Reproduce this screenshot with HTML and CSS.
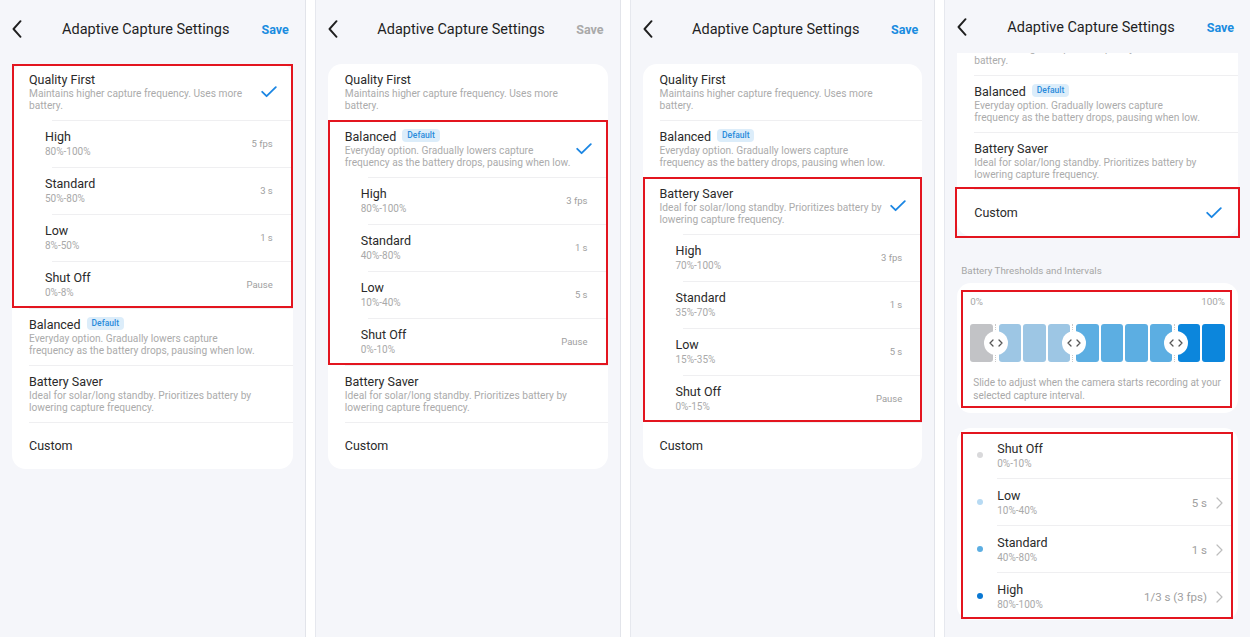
FILE: index.html
```html
<!DOCTYPE html>
<html lang="en">
<head>
<meta charset="utf-8">
<title>Adaptive Capture Settings</title>
<link rel="stylesheet" href="styles.css">
</head>
<body>
<div class="screens">

  <!-- Screen 1: Quality First -->
  <section class="phone">
    <header class="topbar">
      <span class="back"><svg width="10" height="18" viewBox="0 0 10 18"><path d="M8.5 1.2 L1.5 9 L8.5 16.8" fill="none" stroke="#1f1f1f" stroke-width="1.9" stroke-linecap="round" stroke-linejoin="round"/></svg></span>
      <h1 class="title">Adaptive Capture Settings</h1>
      <span class="save">Save</span>
    </header>
    <div class="content">
      <div class="card">
        <div class="group marked">
          <div class="mode">
            <div class="mode-text">
              <div class="mode-name">Quality First</div>
              <div class="mode-desc">Maintains higher capture frequency. Uses more battery.</div>
            </div>
            <svg class="check" width="16" height="12" viewBox="0 0 16 12"><path d="M1.2 5.8 L5.6 10.2 L14.8 1.2" fill="none" stroke="#1b86e3" stroke-width="1.8" stroke-linecap="round" stroke-linejoin="round"/></svg>
          </div>
          <div class="sub"><div><div class="sub-name">High</div><div class="sub-range">80%-100%</div></div><span class="sub-val">5 fps</span></div>
          <div class="sub"><div><div class="sub-name">Standard</div><div class="sub-range">50%-80%</div></div><span class="sub-val">3 s</span></div>
          <div class="sub"><div><div class="sub-name">Low</div><div class="sub-range">8%-50%</div></div><span class="sub-val">1 s</span></div>
          <div class="sub"><div><div class="sub-name">Shut Off</div><div class="sub-range">0%-8%</div></div><span class="sub-val">Pause</span></div>
        </div>
        <div class="mode">
          <div class="mode-text">
            <div class="mode-name">Balanced <span class="badge">Default</span></div>
            <div class="mode-desc">Everyday option. Gradually lowers capture frequency as the battery drops, pausing when low.</div>
          </div>
        </div>
        <div class="mode">
          <div class="mode-text">
            <div class="mode-name">Battery Saver</div>
            <div class="mode-desc">Ideal for solar/long standby. Prioritizes battery by lowering capture frequency.</div>
          </div>
        </div>
        <div class="mode mode-plain">
          <div class="mode-text"><div class="mode-name">Custom</div></div>
        </div>
      </div>
    </div>
  </section>

  <!-- Screen 2: Balanced -->
  <section class="phone">
    <header class="topbar">
      <span class="back"><svg width="10" height="18" viewBox="0 0 10 18"><path d="M8.5 1.2 L1.5 9 L8.5 16.8" fill="none" stroke="#1f1f1f" stroke-width="1.9" stroke-linecap="round" stroke-linejoin="round"/></svg></span>
      <h1 class="title">Adaptive Capture Settings</h1>
      <span class="save save-off">Save</span>
    </header>
    <div class="content">
      <div class="card">
        <div class="mode">
          <div class="mode-text">
            <div class="mode-name">Quality First</div>
            <div class="mode-desc">Maintains higher capture frequency. Uses more battery.</div>
          </div>
        </div>
        <div class="group marked">
          <div class="mode">
            <div class="mode-text">
              <div class="mode-name">Balanced <span class="badge">Default</span></div>
              <div class="mode-desc">Everyday option. Gradually lowers capture frequency as the battery drops, pausing when low.</div>
            </div>
            <svg class="check" width="16" height="12" viewBox="0 0 16 12"><path d="M1.2 5.8 L5.6 10.2 L14.8 1.2" fill="none" stroke="#1b86e3" stroke-width="1.8" stroke-linecap="round" stroke-linejoin="round"/></svg>
          </div>
          <div class="sub"><div><div class="sub-name">High</div><div class="sub-range">80%-100%</div></div><span class="sub-val">3 fps</span></div>
          <div class="sub"><div><div class="sub-name">Standard</div><div class="sub-range">40%-80%</div></div><span class="sub-val">1 s</span></div>
          <div class="sub"><div><div class="sub-name">Low</div><div class="sub-range">10%-40%</div></div><span class="sub-val">5 s</span></div>
          <div class="sub"><div><div class="sub-name">Shut Off</div><div class="sub-range">0%-10%</div></div><span class="sub-val">Pause</span></div>
        </div>
        <div class="mode">
          <div class="mode-text">
            <div class="mode-name">Battery Saver</div>
            <div class="mode-desc">Ideal for solar/long standby. Prioritizes battery by lowering capture frequency.</div>
          </div>
        </div>
        <div class="mode mode-plain">
          <div class="mode-text"><div class="mode-name">Custom</div></div>
        </div>
      </div>
    </div>
  </section>

  <!-- Screen 3: Battery Saver -->
  <section class="phone">
    <header class="topbar">
      <span class="back"><svg width="10" height="18" viewBox="0 0 10 18"><path d="M8.5 1.2 L1.5 9 L8.5 16.8" fill="none" stroke="#1f1f1f" stroke-width="1.9" stroke-linecap="round" stroke-linejoin="round"/></svg></span>
      <h1 class="title">Adaptive Capture Settings</h1>
      <span class="save">Save</span>
    </header>
    <div class="content">
      <div class="card">
        <div class="mode">
          <div class="mode-text">
            <div class="mode-name">Quality First</div>
            <div class="mode-desc">Maintains higher capture frequency. Uses more battery.</div>
          </div>
        </div>
        <div class="mode">
          <div class="mode-text">
            <div class="mode-name">Balanced <span class="badge">Default</span></div>
            <div class="mode-desc">Everyday option. Gradually lowers capture frequency as the battery drops, pausing when low.</div>
          </div>
        </div>
        <div class="group marked">
          <div class="mode">
            <div class="mode-text">
              <div class="mode-name">Battery Saver</div>
              <div class="mode-desc">Ideal for solar/long standby. Prioritizes battery by lowering capture frequency.</div>
            </div>
            <svg class="check" width="16" height="12" viewBox="0 0 16 12"><path d="M1.2 5.8 L5.6 10.2 L14.8 1.2" fill="none" stroke="#1b86e3" stroke-width="1.8" stroke-linecap="round" stroke-linejoin="round"/></svg>
          </div>
          <div class="sub"><div><div class="sub-name">High</div><div class="sub-range">70%-100%</div></div><span class="sub-val">3 fps</span></div>
          <div class="sub"><div><div class="sub-name">Standard</div><div class="sub-range">35%-70%</div></div><span class="sub-val">1 s</span></div>
          <div class="sub"><div><div class="sub-name">Low</div><div class="sub-range">15%-35%</div></div><span class="sub-val">5 s</span></div>
          <div class="sub"><div><div class="sub-name">Shut Off</div><div class="sub-range">0%-15%</div></div><span class="sub-val">Pause</span></div>
        </div>
        <div class="mode mode-plain">
          <div class="mode-text"><div class="mode-name">Custom</div></div>
        </div>
      </div>
    </div>
  </section>

  <!-- Screen 4: Custom -->
  <section class="phone">
    <header class="topbar topbar-tight">
      <span class="back"><svg width="10" height="18" viewBox="0 0 10 18"><path d="M8.5 1.2 L1.5 9 L8.5 16.8" fill="none" stroke="#1f1f1f" stroke-width="1.9" stroke-linecap="round" stroke-linejoin="round"/></svg></span>
      <h1 class="title">Adaptive Capture Settings</h1>
      <span class="save">Save</span>
    </header>
    <div class="content content-scrolled">
      <div class="card">
        <div class="mode">
          <div class="mode-text">
            <div class="mode-name">Quality First</div>
            <div class="mode-desc">Maintains higher capture frequency. Uses more battery.</div>
          </div>
        </div>
        <div class="mode">
          <div class="mode-text">
            <div class="mode-name">Balanced <span class="badge">Default</span></div>
            <div class="mode-desc">Everyday option. Gradually lowers capture frequency as the battery drops, pausing when low.</div>
          </div>
        </div>
        <div class="mode">
          <div class="mode-text">
            <div class="mode-name">Battery Saver</div>
            <div class="mode-desc">Ideal for solar/long standby. Prioritizes battery by lowering capture frequency.</div>
          </div>
        </div>
        <div class="group marked marked-out">
          <div class="mode mode-plain">
            <div class="mode-text"><div class="mode-name">Custom</div></div>
            <svg class="check" width="16" height="12" viewBox="0 0 16 12"><path d="M1.2 5.8 L5.6 10.2 L14.8 1.2" fill="none" stroke="#1b86e3" stroke-width="1.8" stroke-linecap="round" stroke-linejoin="round"/></svg>
          </div>
        </div>
      </div>

      <div class="section-label">Battery Thresholds and Intervals</div>

      <div class="card card-pad">
        <div class="slider marked">
          <div class="scale"><span>0%</span><span>100%</span></div>
          <div class="bar">
            <span class="seg seg-off"></span>
            <span class="cut"><span class="knob"><svg width="14" height="8" viewBox="0 0 14 8"><path d="M4 1 L1 4 L4 7 M10 1 L13 4 L10 7" fill="none" stroke="#555" stroke-width="1.3" stroke-linecap="round" stroke-linejoin="round"/></svg></span></span>
            <span class="seg seg-low"></span>
            <span class="seg seg-low"></span>
            <span class="seg seg-low"></span>
            <span class="cut"><span class="knob"><svg width="14" height="8" viewBox="0 0 14 8"><path d="M4 1 L1 4 L4 7 M10 1 L13 4 L10 7" fill="none" stroke="#555" stroke-width="1.3" stroke-linecap="round" stroke-linejoin="round"/></svg></span></span>
            <span class="seg seg-std"></span>
            <span class="seg seg-std"></span>
            <span class="seg seg-std"></span>
            <span class="seg seg-std"></span>
            <span class="cut"><span class="knob"><svg width="14" height="8" viewBox="0 0 14 8"><path d="M4 1 L1 4 L4 7 M10 1 L13 4 L10 7" fill="none" stroke="#555" stroke-width="1.3" stroke-linecap="round" stroke-linejoin="round"/></svg></span></span>
            <span class="seg seg-high"></span>
            <span class="seg seg-high"></span>
          </div>
          <p class="slider-note">Slide to adjust when the camera starts recording at your selected capture interval.</p>
        </div>
      </div>

      <div class="card card-list">
        <div class="levels marked">
          <div class="lvl">
            <span class="dot dot-off"></span>
            <div class="lvl-body">
              <div><div class="lvl-name">Shut Off</div><div class="lvl-range">0%-10%</div></div>
            </div>
          </div>
          <div class="lvl">
            <span class="dot dot-low"></span>
            <div class="lvl-body">
              <div><div class="lvl-name">Low</div><div class="lvl-range">10%-40%</div></div>
              <span class="lvl-val">5 s</span>
              <svg class="chev" width="7" height="12" viewBox="0 0 7 12"><path d="M1 1 L6 6 L1 11" fill="none" stroke="#bdbdbd" stroke-width="1.2" stroke-linecap="round" stroke-linejoin="round"/></svg>
            </div>
          </div>
          <div class="lvl">
            <span class="dot dot-std"></span>
            <div class="lvl-body">
              <div><div class="lvl-name">Standard</div><div class="lvl-range">40%-80%</div></div>
              <span class="lvl-val">1 s</span>
              <svg class="chev" width="7" height="12" viewBox="0 0 7 12"><path d="M1 1 L6 6 L1 11" fill="none" stroke="#bdbdbd" stroke-width="1.2" stroke-linecap="round" stroke-linejoin="round"/></svg>
            </div>
          </div>
          <div class="lvl">
            <span class="dot dot-high"></span>
            <div class="lvl-body">
              <div><div class="lvl-name">High</div><div class="lvl-range">80%-100%</div></div>
              <span class="lvl-val">1/3 s (3 fps)</span>
              <svg class="chev" width="7" height="12" viewBox="0 0 7 12"><path d="M1 1 L6 6 L1 11" fill="none" stroke="#bdbdbd" stroke-width="1.2" stroke-linecap="round" stroke-linejoin="round"/></svg>
            </div>
          </div>
        </div>
      </div>
    </div>
  </section>

</div>
</body>
</html>
```

FILE: styles.css
```css
* { box-sizing: border-box; }

html, body {
  margin: 0;
  padding: 0;
  background: #ffffff;
  font-family: Roboto, "Noto Sans", "Liberation Sans", sans-serif;
  color: #2a2a2a;
}

.screens {
  display: grid;
  grid-template-columns: repeat(4, 1fr);
  column-gap: 9px;
  width: 1250px;
  height: 637px;
}

.phone {
  background: #f5f6fa;
  border-left: 1px solid #e6e8ee;
  border-right: 1px solid #e2e4ea;
  height: 637px;
  display: flex;
  flex-direction: column;
  overflow: hidden;
}
.phone:first-child { border-left: 0; }
.phone:last-child { border-right: 0; }

/* Top bar */
.topbar {
  flex: 0 0 56px;
  display: flex;
  align-items: center;
  padding: 2px 16px 0 12px;
}
.topbar-tight { flex-basis: 53px; padding-top: 1px; }

.back {
  width: 18px;
  display: flex;
  align-items: center;
}
.title {
  flex: 1;
  margin: 0;
  text-align: center;
  font-size: 14.5px;
  font-weight: 400;
  color: #1f1f1f;
}
.save {
  font-size: 12.5px;
  font-weight: 700;
  color: #1a8ce0;
}
.save-off { color: #a9a9a9; }

/* Content */
.content {
  flex: 1;
  overflow: hidden;
  padding-top: 8px;
}
.content-scrolled { padding-top: 0; }
.content-scrolled > .card:first-child { margin-top: -34px; }

.card {
  background: #ffffff;
  border-radius: 14px;
  margin: 0 12px;
}

.marked {
  outline: 2px solid #e3151f;
  outline-offset: -2px;
}
.marked-out { outline-offset: 0; }

/* Mode rows */
.mode {
  display: flex;
  align-items: center;
  margin-left: 17px;
  padding: 8px 16px 9px 0;
  border-top: 1px solid #efeff1;
}
.card > .mode:first-child,
.card > .group:first-child > .mode:first-child { border-top: 0; }

.mode-plain { padding-top: 15px; padding-bottom: 15px; }

.mode-text {
  flex: 1;
  max-width: 227px;
}
.mode-name {
  font-size: 12.5px;
  line-height: 16px;
  color: #2a2a2a;
  display: flex;
  align-items: center;
}
.mode-desc {
  font-size: 10.2px;
  line-height: 11.5px;
  color: #ababab;
}
.check { margin-left: auto; flex: 0 0 auto; }

.badge {
  display: inline-block;
  margin-left: 6px;
  margin-top: -3px;
  padding: 0 5px;
  height: 13px;
  line-height: 13px;
  border-radius: 4px;
  background: #dcedfa;
  color: #2a8bdb;
  font-size: 8.5px;
  font-weight: 500;
}

/* Sub rows */
.sub {
  display: flex;
  align-items: center;
  justify-content: space-between;
  margin-left: 33px;
  padding: 9px 20px 9px 0;
  background: linear-gradient(#efeff1, #efeff1) 7px 0 / calc(100% - 7px) 1px no-repeat;
}
.sub-name {
  font-size: 12.5px;
  line-height: 16px;
  color: #2a2a2a;
}
.sub-range {
  font-size: 10px;
  line-height: 13px;
  color: #a9a9a9;
}
.sub-val {
  font-size: 9.5px;
  color: #a0a0a0;
}

/* Section label */
.section-label {
  margin: 29px 16px 6px;
  font-size: 9.8px;
  line-height: 12px;
  color: #a6a6a6;
}

/* Slider card */
.card-pad { padding: 7px 6px 5px 4px; }
.slider { padding: 6px 7px 6px 9px; }
.scale {
  display: flex;
  justify-content: space-between;
  font-size: 9.8px;
  line-height: 12px;
  color: #a6a6a6;
}
.bar {
  display: flex;
  gap: 2px;
  height: 38px;
  margin-top: 16px;
}
.seg {
  flex: 1;
  border-radius: 3px;
}
.seg-off { background: #c2c3c6; }
.seg-low { background: #9dc6e4; }
.seg-std { background: #5caee2; }
.seg-high { background: #0c86dc; }

.cut {
  flex: 0 0 2px;
  position: relative;
  border-left: 1px dotted #c9c9c9;
}
.knob {
  position: absolute;
  left: 50%;
  top: 50%;
  width: 24px;
  height: 24px;
  margin: -12px 0 0 -12px;
  border-radius: 50%;
  background: #ffffff;
  display: flex;
  align-items: center;
  justify-content: center;
}
.slider-note {
  margin: 15px 0 0 3px;
  font-size: 10px;
  line-height: 12.5px;
  color: #a9a9a9;
}

/* Levels list */
.card-list {
  margin-top: 15px;
  padding: 4px 5px 1px 4px;
}
.lvl {
  display: flex;
  align-items: center;
}
.dot {
  flex: 0 0 6px;
  width: 6px;
  height: 6px;
  border-radius: 50%;
  margin: 0 14px 0 16px;
}
.dot-off { background: #d9d9db; }
.dot-low { background: #b7daf3; }
.dot-std { background: #5caee2; }
.dot-high { background: #0a78d3; }

.lvl-body {
  flex: 1;
  display: flex;
  align-items: center;
  padding: 9px 10px 8px 0;
  border-top: 1px solid #efeff1;
}
.lvl:first-child .lvl-body { border-top: 0; }
.lvl-body > div:first-child { flex: 1; }
.lvl-name {
  font-size: 12.5px;
  line-height: 16px;
  color: #2a2a2a;
}
.lvl-range {
  font-size: 10px;
  line-height: 13px;
  color: #a9a9a9;
}
.lvl-val {
  font-size: 11.5px;
  color: #a0a0a0;
  margin-right: 9px;
}
.chev { flex: 0 0 auto; }
```
